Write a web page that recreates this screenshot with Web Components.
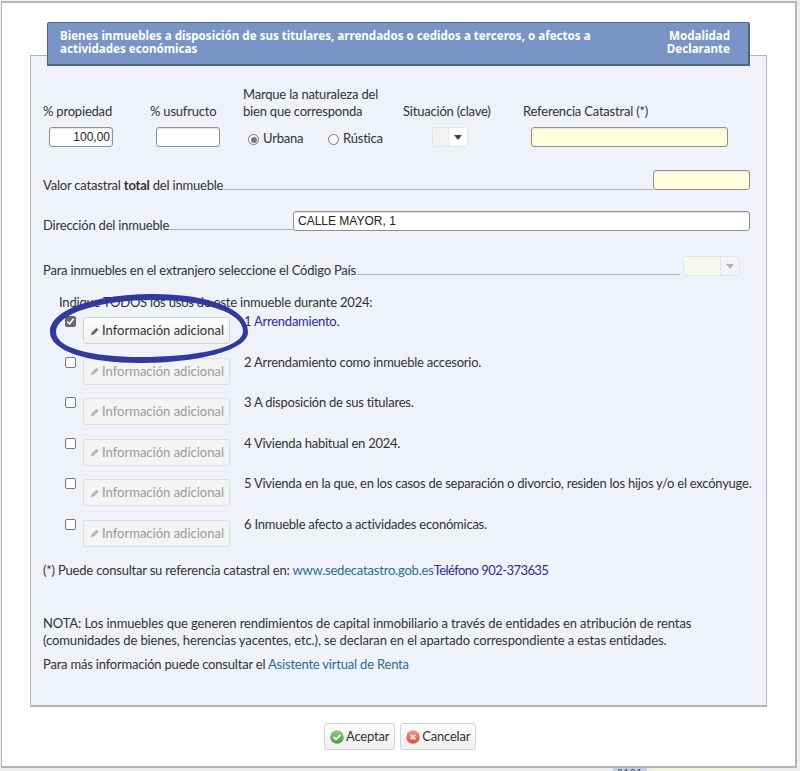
<!DOCTYPE html>
<html>
  <head>
    <meta charset="utf-8">
    <style>
      html, body { margin: 0; padding: 0; background: #eee; }
      body { font-family: Lato, "Liberation Sans", sans-serif; height: 771px; overflow: hidden; position: relative; }
    </style>
    <template id="windowTemplate">
      <style>
        :host {
          display: block; position: relative; box-sizing: border-box; width: 796px; height: 767px;
          margin: 1px 0 0 1px; padding: 19px 0 0 28px; background: #fff;
          border: 2px solid #b5b5b5; border-left-width: 1px;
          font: 13px/17px Lato, "Liberation Sans", sans-serif; letter-spacing: -0.2px; color: #333;
        }
        .actions { display: flex; gap: 5px; padding: 16px 0 0 294px; letter-spacing: -0.2px; }
      </style>
      <slot></slot>
      <div class="actions"><slot name="actions"></slot></div>
    </template>

    <template id="backdropTemplate">
      <style>
        :host { position: absolute; left: 0; right: 0; top: 767px; height: 4px; overflow: hidden; display: block; }
        .code { position: absolute; left: 613px; top: 0; width: 34px; height: 12px; background: #c3d0e2; color: #445;
          font: 10px/13px "Liberation Sans", sans-serif; text-align: center; letter-spacing: 1px; }
        .field { position: absolute; left: 653px; top: 0; width: 106px; height: 12px; background: #f1f4dc; }
      </style>
      <div class="code">0101</div><div class="field"></div>
    </template>

    <template id="panelTemplate">
      <style>
        :host { display: block; position: relative; box-sizing: border-box; width: 737px; height: 685px; padding-top: 33px; }
        .box { position: absolute; inset: 33px 0 0 0; background: #eff2f9; border: 1px solid #b4b4b4; border-bottom-width: 2px; }
        .head { position: relative; box-sizing: border-box; width: 703px; height: 44px; margin: -33px 0 0 17px;
          padding: 6px 18px 0 12px; display: flex; justify-content: space-between;
          background: #7895c6; border: 1px solid #4f6486; border-width: 1px 2px 2px 1px; border-radius: 2px 2px 0 0;
          color: #fff; font: 700 11.6px/13px "Noto Sans", sans-serif; letter-spacing: 0; }
        .title { width: 580px; }
        .mode { text-align: right; }
        .body { position: relative; padding: 0 17px 0 13px; }
      </style>
      <div class="box"></div>
      <div class="head"><div class="title"><slot name="title"></slot></div><div class="mode"><slot name="mode"></slot></div></div>
      <div class="body"><slot></slot></div>
    </template>

    <template id="fieldTemplate">
      <style>
        :host { display: block; box-sizing: border-box; height: 20px; background: #fff; border: 1px solid #8f8f8f;
          border-radius: 3px; font: 12px/18px "Liberation Sans", sans-serif; letter-spacing: 0; color: #222; padding: 0 2px 0 4px; box-shadow: inset 0 1px 1px #e5e5e5; }
        :host([yellow]) { background: #ffffdc; }
        :host([right]) { text-align: right; }
      </style>
      <slot></slot>
    </template>

    <template id="comboTemplate">
      <style>
        :host { display: flex; box-sizing: border-box; height: 20px; background: #fff; border: 1px solid #e2e4e8; border-radius: 3px; }
        .v { flex: 1; background: #f2f3f5; border-right: 1px solid #e2e4e8; }
        .a { width: 18px; display: flex; align-items: center; justify-content: center; }
        :host([off]) { background: #f3f4f6; }
        :host([off]) .v { background: #f6f8ea; }
        i { display: block; border: 4px solid transparent; border-top: 5px solid #444; border-bottom: 0; margin-top: 1px; }
        :host([off]) i { border-top-color: #b4b4b4; }
      </style>
      <div class="v"></div><div class="a"><i></i></div>
    </template>

    <template id="leaderTemplate">
      <style>
        :host { display: flex; align-items: flex-end; height: 21px; white-space: nowrap; }
        .label { line-height: 17px; margin-bottom: -3px; }
        .line { flex: 1; height: 0; border-bottom: 1px solid #b2b2b2; margin-bottom: 1px; }
        ::slotted([slot=control]) { flex: none; }
      </style>
      <span class="label"><slot></slot></span>
      <span class="line"></span>
      <slot name="control"></slot>
    </template>

    <template id="useTemplate">
      <style>
        :host { display: grid; grid-template-columns: 23px 147px auto; height: 40.6px; }
        .check { box-sizing: border-box; width: 11px; height: 11px; margin: 1px 0 0 5px; background: #fff;
          border: 1px solid #777; border-radius: 2px; display: flex; }
        :host([on]) .check { background: #6a6a6a; border-color: #666; }
        svg { display: none; }
        :host([on]) svg { display: block; }
        .button { margin-top: 2px; }
        .text { padding-left: 14px; line-height: 17px; margin-top: -2px; white-space: nowrap; letter-spacing: -0.24px; }
        :host([on]) .text { color: #2c2c9c; }
      </style>
      <div class="check"><svg width="9" height="9" viewBox="0 0 10 10"><path d="M1.5 5.2 4 7.6 8.5 2" fill="none" stroke="#fff" stroke-width="1.8"/></svg></div>
      <div class="button"><slot name="button"></slot></div>
      <div class="text"><slot></slot></div>
    </template>

    <template id="btnTemplate">
      <style>
        :host { display: inline-flex; align-items: center; box-sizing: border-box; height: 27px; padding: 0 5px;
          border: 1px solid #d3d3d3; border-radius: 3px; background: linear-gradient(#fdfdfd, #f0f0f0);
          color: #333; white-space: nowrap; gap: 2px; }
        :host(.info) { letter-spacing: 0; }
        :host([off]) { color: #9a9a9a; background: #f4f4f5; border-color: #dedede; }
        :host([off]) ::slotted(svg) { opacity: .45; }
      </style>
      <slot></slot>
    </template>

    <script type="text/javascript">
      class Base extends HTMLElement {
        constructor() {
          super();
          this.attachShadow({ mode: 'open' });
          this.shadowRoot.append(
            document.getElementById(this.constructor.tplId).content.cloneNode(true)
          );
        }
      }
      class RentaBackdrop extends Base { static tplId = 'backdropTemplate'; }
      class RentaWindow extends Base { static tplId = 'windowTemplate'; }
      class RentaPanel extends Base { static tplId = 'panelTemplate'; }
      class RentaField extends Base { static tplId = 'fieldTemplate'; }
      class RentaCombo extends Base { static tplId = 'comboTemplate'; }
      class RentaLeader extends Base { static tplId = 'leaderTemplate'; }
      class RentaUse extends Base { static tplId = 'useTemplate'; }
      class RentaBtn extends Base { static tplId = 'btnTemplate'; }

      customElements.define('renta-backdrop', RentaBackdrop);
      customElements.define('renta-window', RentaWindow);
      customElements.define('renta-panel', RentaPanel);
      customElements.define('renta-field', RentaField);
      customElements.define('renta-combo', RentaCombo);
      customElements.define('renta-leader', RentaLeader);
      customElements.define('renta-use', RentaUse);
      customElements.define('renta-btn', RentaBtn);
    </script>
    <style>
      .top { display: grid; grid-template-columns: 107px 93px 160px 120px 1fr; padding-top: 20px; }
      .top .h { height: 34px; display: flex; align-items: flex-end; line-height: 17px; }
      .top .c { padding-top: 7px; height: 20px; }
      .radios { display: flex; align-items: center; height: 20px; padding-left: 5px; margin-top: 1px; }
      .radio { width: 11px; height: 11px; margin-top: 3px; box-sizing: border-box; border: 1px solid #777; border-radius: 50%; background: #fff; margin-right: 4px; display: flex; align-items: center; justify-content: center; }
      .radio b { width: 6px; height: 6px; border-radius: 50%; background: #777; }
      a { color: #2a6d96; text-decoration: none; }
      .tel { color: #2c2c9c; letter-spacing: -0.55px; }
      p { margin: 0; }
      .note { letter-spacing: -0.11px; }
      .info { width: 147px; }
      .ring { position: absolute; left: 15px; top: 222px; pointer-events: none; }
    </style>
  </head>
  <body>
    <renta-backdrop></renta-backdrop>
    <renta-window>
      <renta-panel>
        <span slot="title">Bienes inmuebles a disposición de sus titulares, arrendados o cedidos a terceros, o afectos a actividades económicas</span>
        <span slot="mode">Modalidad<br>Declarante</span>

        <div class="top">
          <div class="h">% propiedad</div>
          <div class="h">% usufructo</div>
          <div class="h">Marque la naturaleza del<br>bien que corresponda</div>
          <div class="h">Situación (clave)</div>
          <div class="h">Referencia Catastral (*)</div>
          <div class="c"><renta-field right style="width:64px;margin-left:6px">100,00</renta-field></div>
          <div class="c"><renta-field style="width:64px;margin-left:6px"></renta-field></div>
          <div class="c"><div class="radios"><span class="radio"><b></b></span><span style="width:65px">Urbana</span><span class="radio"></span>Rústica</div></div>
          <div class="c"><renta-combo style="width:36px;margin-left:29px"></renta-combo></div>
          <div class="c"><renta-field yellow style="width:197px;margin-left:8px"></renta-field></div>
        </div>

        <renta-leader style="margin-top:23px"><span>Valor catastral <b>total</b> del inmueble</span><renta-field slot="control" yellow style="width:97px;margin-bottom:1px"></renta-field></renta-leader>
        <renta-leader style="margin-top:19px"><span>Dirección del inmueble</span><renta-field slot="control" style="width:457px">CALLE MAYOR, 1</renta-field></renta-leader>
        <renta-leader style="margin-top:24px;margin-right:10px"><span>Para inmuebles en el extranjero seleccione el Código País</span><renta-combo slot="control" off style="width:57px;margin-left:3px"></renta-combo></renta-leader>

        <p style="margin:18px 0 4px 16px">Indique TODOS los usos de este inmueble durante 2024:</p>
        <div style="padding-left:17px">
          <renta-use on>
            <renta-btn class="info" slot="button"><svg width="14" height="14" viewBox="0 0 14 14"><path d="M2.5 12.5 3.4 9 9.5 3 12 5.5 6 11.5Z" fill="#666"/></svg>Información adicional</renta-btn>
            1 Arrendamiento.
          </renta-use>
          <renta-use>
            <renta-btn class="info" slot="button" off><svg width="14" height="14" viewBox="0 0 14 14"><path d="M2.5 12.5 3.4 9 9.5 3 12 5.5 6 11.5Z" fill="#666"/></svg>Información adicional</renta-btn>
            2 Arrendamiento como inmueble accesorio.
          </renta-use>
          <renta-use>
            <renta-btn class="info" slot="button" off><svg width="14" height="14" viewBox="0 0 14 14"><path d="M2.5 12.5 3.4 9 9.5 3 12 5.5 6 11.5Z" fill="#666"/></svg>Información adicional</renta-btn>
            3 A disposición de sus titulares.
          </renta-use>
          <renta-use>
            <renta-btn class="info" slot="button" off><svg width="14" height="14" viewBox="0 0 14 14"><path d="M2.5 12.5 3.4 9 9.5 3 12 5.5 6 11.5Z" fill="#666"/></svg>Información adicional</renta-btn>
            4 Vivienda habitual en 2024.
          </renta-use>
          <renta-use>
            <renta-btn class="info" slot="button" off><svg width="14" height="14" viewBox="0 0 14 14"><path d="M2.5 12.5 3.4 9 9.5 3 12 5.5 6 11.5Z" fill="#666"/></svg>Información adicional</renta-btn>
            5 Vivienda en la que, en los casos de separación o divorcio, residen los hijos y/o el excónyuge.
          </renta-use>
          <renta-use>
            <renta-btn class="info" slot="button" off><svg width="14" height="14" viewBox="0 0 14 14"><path d="M2.5 12.5 3.4 9 9.5 3 12 5.5 6 11.5Z" fill="#666"/></svg>Información adicional</renta-btn>
            6 Inmueble afecto a actividades económicas.
          </renta-use>
        </div>

        <p style="margin-top:3px">(*) Puede consultar su referencia catastral en: <a>www.sedecatastro.gob.es</a><span class="tel">Teléfono 902-373635</span></p>
        <p class="note" style="margin-top:36px">NOTA: Los inmuebles que generen rendimientos de capital inmobiliario a través de entidades en atribución de rentas<br>(comunidades de bienes, herencias yacentes, etc.), se declaran en el apartado correspondiente a estas entidades.</p>
        <p style="margin-top:7px">Para más información puede consultar el <a>Asistente virtual de Renta</a></p>

        <svg class="ring" width="210" height="80" viewBox="0 0 210 80"><path fill-rule="evenodd" d="M5 44C5 20 55 6 108 6 162 6 203 20 203 44 203 63 150 75 95 75 43 75 5 63 5 44ZM11 44C11 25 57 12 108 12 158 12 198 24 198 43 198 60 150 69 95 69 47 69 11 60 11 44Z" fill="#2e3a9e"/></svg>
      </renta-panel>

      <renta-btn slot="actions"><svg width="14" height="14" viewBox="0 0 14 14"><defs><linearGradient id="okFill" x1="0" y1="0" x2="0" y2="1"><stop offset="0" stop-color="#8fcf7c"/><stop offset="1" stop-color="#3f9f3d"/></linearGradient></defs><circle cx="7" cy="7" r="6.8" fill="url(#okFill)"/><path d="M3.6 7 6 9.4 10.4 5" fill="none" stroke="#fff" stroke-width="1.9"/></svg>Aceptar</renta-btn>
      <renta-btn slot="actions"><svg width="14" height="14" viewBox="0 0 14 14"><defs><linearGradient id="koFill" x1="0" y1="0" x2="0" y2="1"><stop offset="0" stop-color="#ee9a80"/><stop offset="1" stop-color="#d9503c"/></linearGradient></defs><circle cx="7" cy="7" r="6.8" fill="url(#koFill)"/><path d="M4.6 4.6 9.4 9.4M9.4 4.6 4.6 9.4" fill="none" stroke="#f6e3dc" stroke-width="1.9"/></svg>Cancelar</renta-btn>
    </renta-window>
  </body>
</html>
